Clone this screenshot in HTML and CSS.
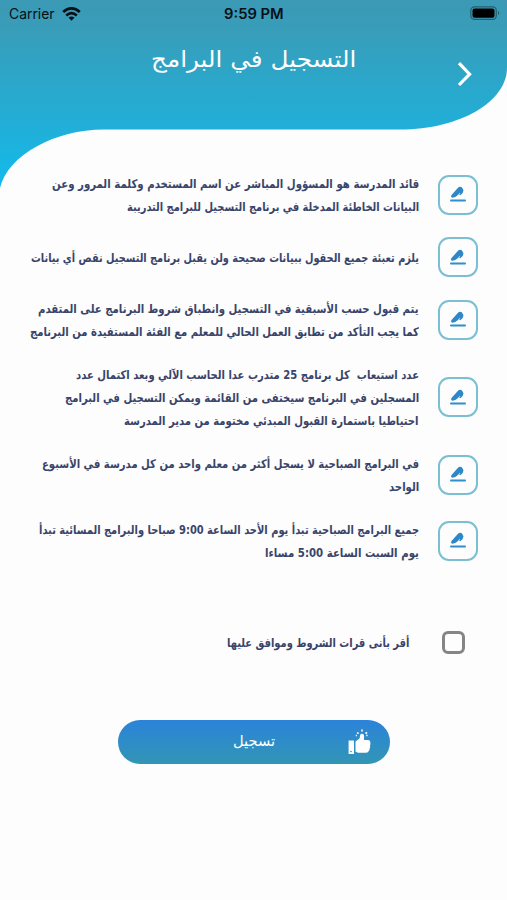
FILE: index.html
```html
<!DOCTYPE html>
<html lang="ar" dir="rtl">
<head>
<meta charset="utf-8">
<title>التسجيل في البرامج</title>
<link rel="stylesheet" href="styles.css">
</head>
<body>
<svg width="0" height="0" class="defs">
  <symbol id="pen" viewBox="0 0 18 18">
    <path d="M2.300 10.300 8.800 3Q10.800 .9 12.800 2.300L14.500 5.200 13.700 8.100 11.300 10.200 10.100 9.400 11.300 7.900 10.900 7.700 8.700 10.300Q6.600 12.600 3.400 12.800Q1.400 12.300 2.300 10.300Z" fill="#2d87c9"/>
    <path d="M2 15.500H16" stroke="#2d8fcb" stroke-width="2" stroke-linecap="round"/>
  </symbol>
</svg>
<header class="header">
  <svg class="wave" viewBox="0 0 507 188" width="507" height="188">
    <defs><linearGradient id="sky" x1="0" y1="0" x2="0" y2="1"><stop offset="0" stop-color="#3b99b5"/><stop offset=".15" stop-color="#389db9"/><stop offset=".65" stop-color="#22aed7"/><stop offset="1" stop-color="#13bbeb"/></linearGradient></defs>
    <path d="M0 0H507V68C507 101 461 129.500 400 129.500H104C55 129.500 8 155 0 188Z" fill="url(#sky)"/>
  </svg>
  <div class="status" dir="ltr">
    <div class="carrier"><span class="fit" data-width="46">Carrier</span>
      <svg width="19" height="14" viewBox="0 0 19 14"><g fill="none" stroke="#071016" stroke-width="2.700"><path d="M1.200 5.100Q9.500-2.300 17.800 5.100"/><path d="M4.200 8.500Q9.500 3.900 14.800 8.500"/></g><path d="M6.500 10.600Q9.500 8.200 12.500 10.600L9.500 13.700Z" fill="#071016"/></svg>
    </div>
    <div class="clock"><span class="fit" data-width="60">9:59 PM</span></div>
    <svg class="battery" width="31" height="15" viewBox="0 0 31 15"><rect x=".8" y=".8" width="25.500" height="12.600" rx="3.600" fill="none" stroke="#24606f" stroke-width="1.200"/><rect x="2.500" y="2.500" width="22" height="9.300" rx="2" fill="#000"/><path d="M28 5Q30.500 7 28 9.200Z" fill="#24606f"/></svg>
  </div>
  <div class="titlebar">
    <svg class="next" width="18" height="28" viewBox="0 0 18 28"><path d="M3 3.200 13.600 14.200 3 25" fill="none" stroke="#fff" stroke-width="3.200"/></svg>
    <h1><span class="fit" data-width="205">التسجيل في البرامج</span></h1>
  </div>
</header>
<main>
  <ul class="terms">
    <li><i class="badge"><svg><use href="#pen"/></svg></i><p><span class="fit" data-width="367">قائد المدرسة هو المسؤول المباشر عن اسم المستخدم وكلمة المرور وعن</span><span class="fit" data-width="292">البيانات الخاطئة المدخلة في برنامج التسجيل للبرامج التدريبة</span></p></li>
    <li><i class="badge"><svg><use href="#pen"/></svg></i><p><span class="fit" data-width="388">يلزم تعبئة جميع الحقول ببيانات صحيحة ولن يقبل برنامج التسجيل نقص أي بيانات</span></p></li>
    <li><i class="badge"><svg><use href="#pen"/></svg></i><p><span class="fit" data-width="381">يتم قبول حسب الأسبقية في التسجيل وانطباق شروط البرنامج على المتقدم</span><span class="fit" data-width="389">كما يجب التأكد من تطابق العمل الحالي للمعلم مع الفئة المستفيدة من البرنامج</span></p></li>
    <li><i class="badge"><svg><use href="#pen"/></svg></i><p><span class="fit" data-width="343">عدد استيعاب&nbsp; كل برنامج 25 متدرب عدا الحاسب الآلي وبعد اكتمال عدد</span><span class="fit" data-width="354">المسجلين في البرنامج سيختفى من القائمة ويمكن التسجيل في البرامج</span><span class="fit" data-width="295">احتياطيا باستمارة القبول المبدئي مختومة من مدير المدرسة</span></p></li>
    <li><i class="badge"><svg><use href="#pen"/></svg></i><p><span class="fit" data-width="377">في البرامج الصباحية لا يسجل أكثر من معلم واحد من كل مدرسة في الأسبوع</span><span class="fit" data-width="30">الواحد</span></p></li>
    <li><i class="badge"><svg><use href="#pen"/></svg></i><p><span class="fit" data-width="380">جميع البرامج الصباحية تبدأ يوم الأحد الساعة 9:00 صباحا والبرامج المسائية تبدأ</span><span class="fit" data-width="154">يوم السبت الساعة 5:00 مساءا</span></p></li>
  </ul>
  <label class="agree"><span class="box"></span><span class="fit" data-width="182">أقر بأنى قرات الشروط وموافق عليها</span></label>
  <button class="submit">
    <svg width="24" height="26" viewBox="0 0 24 26"><g fill="#fff"><path d="M.6 11.500H6V25H.6Z"/><path d="M7.500 12.500 11.500 9.500 12.200 6Q12.800 4.300 14.400 4.800Q16.700 5.500 16 9.800V11H20Q22.400 11 22.300 13.500Q22.800 15 22 16.500Q22.600 18 21.600 19.500Q21.800 21 20.700 22Q20.500 23.700 18 23.700H10L7.500 22.500Z"/></g><path d="M9.200 3.500 10.600 4.700M14 .5V2.500M19 3.300 17.500 4.600M7.800 6.500H9M18.300 6.500H19.600" stroke="#fff" stroke-width="1.600"/><circle cx="3" cy="22.500" r=".8" fill="#2f8bc6"/></svg>
    <span class="fit" data-width="42">تسجيل</span>
  </button>
</main>
<script src="fit.js"></script>
</body>
</html>
```
FILE: styles.css
```css
* { box-sizing: border-box; }
body {
  margin: 0;
  width: 507px;
  height: 900px;
  overflow: hidden;
  background: #fdfdfd;
  color: #39446a;
  font-family: "DejaVu Sans", sans-serif;
}
.defs { position: absolute; }
.fit {
  display: block;
  width: max-content;
  white-space: nowrap;
  transform-origin: right center;
}
.header { position: relative; height: 172px; }
.wave { position: absolute; left: 0; top: 0; }
.status {
  position: relative;
  display: grid;
  grid-template-columns: 1fr auto 1fr;
  align-items: center;
  height: 27px;
  padding: 0 6px 0 9px;
  color: #071016;
  font: 14.5px Inter, sans-serif;
}
.status .fit { transform-origin: left center; }
.carrier { display: flex; align-items: center; gap: 5px; }
.clock { font-weight: 600; width: 60px; margin-right: 2px; }
.battery { justify-self: end; }
.titlebar {
  position: relative;
  display: grid;
  grid-template-columns: 50px 1fr 50px;
  padding-top: 16px;
}
.next { margin: 17px 33px 0 0; }
h1 {
  margin: 0;
  width: 205px;
  justify-self: center;
  color: #fff;
  font-size: 23px;
  line-height: 32px;
  font-weight: 400;
}
.terms {
  display: flex;
  flex-direction: column;
  gap: 20px;
  margin: 0;
  padding: 0 29px 0 0;
  list-style: none;
}
.terms li { display: flex; align-items: center; gap: 19px; }
.badge {
  display: grid;
  place-items: center;
  flex: none;
  width: 40px;
  height: 40px;
  margin-top: -1px;
  border: 2px solid #7bbfd3;
  border-radius: 11px;
}
.badge svg { width: 18px; height: 18px; margin-top: -1px; }
p {
  flex: 1;
  min-width: 0;
  margin: 0;
  padding-top: 1px;
  margin-bottom: -1px;
  overflow: hidden;
  font-size: 12px;
  line-height: 23px;
  font-weight: 700;
  font-stretch: condensed;
}
.agree {
  display: flex;
  align-items: center;
  gap: 33px;
  margin: 67px 42px 0 0;
  font-size: 12px;
  font-weight: 700;
}
.box {
  width: 23px;
  height: 23px;
  border: 3px solid #858585;
  border-radius: 6px;
}
.submit {
  display: grid;
  grid-template-columns: 70px 1fr 70px;
  align-items: center;
  width: 272px;
  height: 44px;
  margin: 66px 117.500px 0 0;
  padding: 0;
  border: 0;
  border-radius: 22px;
  background: linear-gradient(#2b83d9, #3296b5);
  color: #fff;
  font: 15px "DejaVu Sans", sans-serif;
}
.submit svg { margin-right: 18px; }
.submit .fit { justify-self: end; margin: -2px 0 0 44px; }
```
FILE: fit.js
```js
// Scale each line horizontally to the measure given in data-width.
document.querySelectorAll('.fit').forEach(function (line) {
  var natural = line.offsetWidth;
  line.style.transform = 'scaleX(' + line.dataset.width / natural + ')';
});
```
